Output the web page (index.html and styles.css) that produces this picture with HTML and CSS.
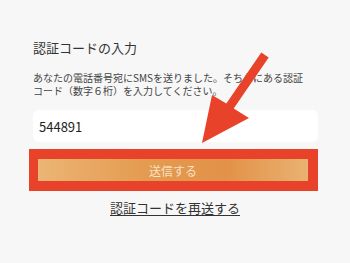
FILE: index.html
```html
<!DOCTYPE html>
<html lang="ja">
<head>
<meta charset="utf-8">
<link rel="stylesheet" href="styles.css">
</head>
<body>
<div class="page">
  <h1 class="title">認証コードの入力</h1>
  <p class="desc">あなたの電話番号宛にSMSを送りました。そちらにある認証<br>コード（数字６桁）を入力してください。</p>
  <div class="field">544891</div>
  <div class="highlight">
    <div class="submit">送信する</div>
  </div>
  <div class="resend"><span class="link">認証コードを再送する</span></div>
</div>
<svg class="arrow" width="350" height="263" viewBox="0 0 350 263">
  <polygon fill="#e8432a" points="268.7,57.5 261.3,52.5 226.3,103.5 212,95 202,143 249,118 233.7,108.5"/>
</svg>
</body>
</html>
```

FILE: styles.css
```css
html, body {
  margin: 0;
  padding: 0;
  background: #f7f7f7;
  width: 350px;
  height: 263px;
  overflow: hidden;
}
body {
  position: relative;
  font-family: "Noto Sans CJK JP", "Noto Sans", sans-serif;
  color: #333;
}
.page {
  padding: 40px 32px 0 33px;
}
.title {
  margin: 0;
  font-size: 13px;
  line-height: 16px;
  font-weight: 400;
  color: #333;
}
.desc {
  margin: 15px 0 0;
  font-size: 10px;
  line-height: 13px;
  color: #444;
}
.field {
  margin-top: 13px;
  height: 32px;
  background: #fff;
  border-radius: 6px;
  box-sizing: border-box;
  padding-left: 6px;
  display: flex;
  align-items: center;
  font-size: 13px;
  color: #222;
}
.highlight {
  margin: 7px 0 0 -4px;
  width: 289px;
  box-sizing: border-box;
  background: #e8432a;
  padding: 10px 10px 10px 9px;
}
.submit {
  height: 22px;
  background: linear-gradient(90deg, #ebb574 0%, #e49b50 40%, #e29248 70%, #e9b272 100%);
  color: #f7e2c8;
  font-size: 12px;
  display: flex;
  align-items: center;
  justify-content: center;
}
.resend {
  margin: 9px 0 0 -33px;
  width: 350px;
  text-align: center;
  font-size: 13px;
  line-height: 16px;
}
.link {
  color: #333;
  text-decoration: underline;
  text-underline-offset: 2px;
}
.arrow {
  position: absolute;
  left: 0;
  top: 0;
}
```
